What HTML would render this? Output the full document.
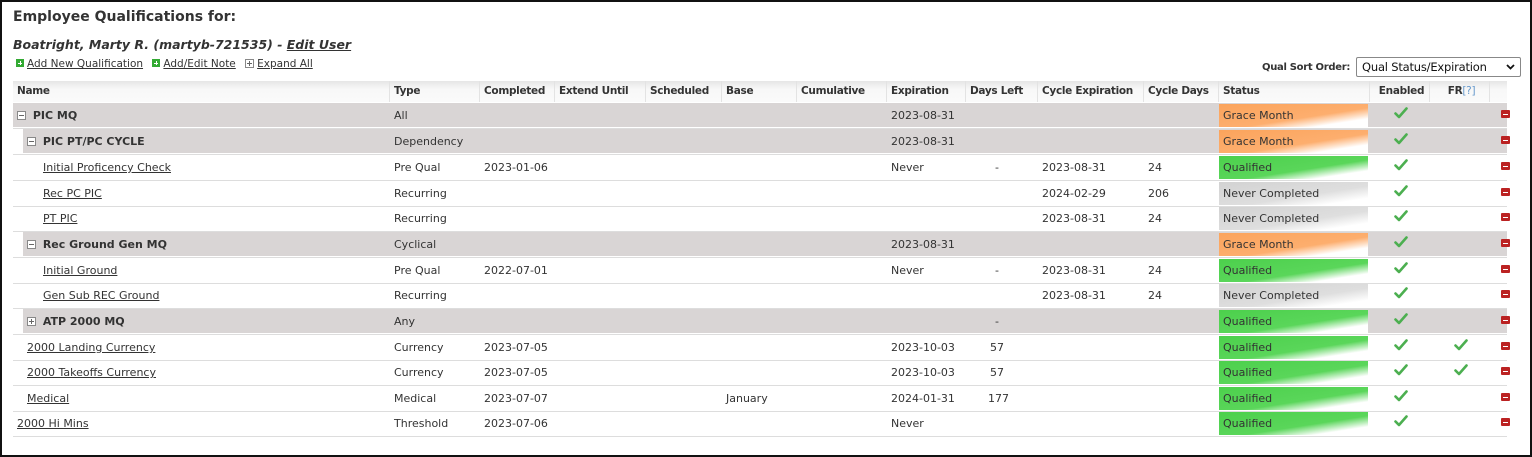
<!DOCTYPE html>
<html><head><meta charset="utf-8"><style>
*{margin:0;padding:0;box-sizing:border-box}
body{width:1532px;height:457px;background:#fff;font-family:"DejaVu Sans","Liberation Sans",sans-serif;font-size:11px;color:#333;position:relative;overflow:hidden}
.frame{position:absolute;left:0;top:0;width:1532px;height:457px;border:2px solid #111}
h1{position:absolute;left:13px;top:9px;font-size:14px;font-weight:bold;color:#333}
.user{position:absolute;left:13px;top:37px;font-size:12.5px;font-weight:bold;font-style:italic;color:#333}
.user u{color:#333}
.links{position:absolute;left:16px;top:58px;font-size:10.5px}
.links span{margin-right:6px}
.links u{color:#333}
.pl{display:inline-block;width:8px;height:8px;background:#3a3;vertical-align:0px;margin-right:3px;position:relative}
.pl:after{content:"";position:absolute;left:2px;top:3.5px;width:4px;height:1px;background:#fff}
.pl:before{content:"";position:absolute;left:3.5px;top:2px;width:1px;height:4px;background:#fff}
.bx{display:inline-block;width:9px;height:9px;border:1px solid #888;vertical-align:-1px;margin-right:3px;position:relative;background:#fff}
.bx:after{content:"";position:absolute;left:1px;top:3px;width:5px;height:1px;background:#666}
.bx.p:before{content:"";position:absolute;left:3px;top:1px;width:1px;height:5px;background:#666}
.sort{position:absolute;left:1262px;top:62px;font-weight:bold;font-size:10px;letter-spacing:-0.3px}
.sel{position:absolute;left:1356px;top:57px;width:165px;height:20px;border:1px solid #888;border-radius:2px;font-size:11.5px;line-height:18px;padding-left:5px;color:#111;letter-spacing:-0.2px}
.sel svg{position:absolute;right:5px;top:6px}
.hdr{position:absolute;left:13px;top:81px;width:1494px;height:21px;background:linear-gradient(#e6e6e6,#f8f8f8 40%,#fafafa);font-weight:bold;color:#333;font-size:10.5px;letter-spacing:-0.3px}
.hdr div{position:absolute;top:0;line-height:21px;height:21px;border-right:1px solid #e3e3e3;padding-left:4px;white-space:nowrap}
.r{position:absolute;left:13px;width:1494px;height:26px;border-bottom:1px solid #ddd}
.g{position:absolute;top:0;bottom:1px;right:0;background:#d9d5d5}
.c{position:absolute;top:0;line-height:25px;white-space:nowrap}
.b{font-weight:bold}
u{color:#333}
.st{position:absolute;left:1206px;top:1px;width:149px;height:23px;line-height:23px;padding-left:4px}
.o{background:linear-gradient(to bottom right,#fba45c 0%,#fdae6e 58%,#fff 82%)}
.q{background:linear-gradient(to bottom right,#4cd04c 0%,#5ad65a 58%,#fff 82%)}
.n{background:linear-gradient(to bottom right,#d2d2d2 0%,#dedede 58%,#fff 85%)}
.ck{position:absolute;top:4px;width:14px;height:12px}
.mn{position:absolute;left:1488px;top:7px;width:9px;height:8px;background:#b22;border-radius:1px}
.mn:after{content:"";position:absolute;left:2px;top:3.5px;width:5px;height:1.5px;background:#fff}
</style></head><body>
<div class="frame"></div>
<h1>Employee Qualifications for:</h1>
<div class="user">Boatright, Marty R. (martyb-721535) - <u>Edit User</u></div>
<div class="links"><span><i class="pl"></i><u>Add New Qualification</u></span> <span><i class="pl"></i><u>Add/Edit Note</u></span> <span><i class="bx p"></i><u>Expand All</u></span></div>
<div class="sort">Qual Sort Order:</div>
<div class="sel">Qual Status/Expiration<svg width="9" height="6" viewBox="0 0 9 6"><path d="M1 1 L4.5 4.5 L8 1" stroke="#111" stroke-width="1.8" fill="none"/></svg></div>

<div class="hdr">
<div style="left:0;width:377px">Name</div>
<div style="left:377px;width:90px">Type</div>
<div style="left:467px;width:75px">Completed</div>
<div style="left:542px;width:91px">Extend Until</div>
<div style="left:633px;width:76px">Scheduled</div>
<div style="left:709px;width:75px">Base</div>
<div style="left:784px;width:90px">Cumulative</div>
<div style="left:874px;width:79px">Expiration</div>
<div style="left:953px;width:72px">Days Left</div>
<div style="left:1025px;width:106px">Cycle Expiration</div>
<div style="left:1131px;width:75px">Cycle Days</div>
<div style="left:1206px;width:151px">Status</div>
<div style="left:1357px;width:60px;text-align:center">Enabled</div>
<div style="left:1417px;width:60px;text-align:center">FR<span style="color:#69c;font-weight:normal">[?]</span></div>
<div style="left:1477px;width:17px;border:none"></div>
</div>

<svg width="0" height="0" style="position:absolute"><defs><symbol id="ck" viewBox="0 0 14 12"><path d="M1.5 6.5 L5 10 L12.5 1.5" stroke="#4caf50" stroke-width="2.6" fill="none" stroke-linecap="round" stroke-linejoin="round"/></symbol></defs></svg>

<div class="r" style="top:103px"><div class="g" style="left:0"></div>
<div class="c b" style="left:4px"><i class="bx"></i> PIC MQ</div><div class="c" style="left:381px">All</div><div class="c" style="left:878px">2023-08-31</div>
<div class="st o">Grace Month</div><svg class="ck" style="left:1381px"><use href="#ck"/></svg><div class="mn"></div></div>

<div class="r" style="top:129px"><div class="g" style="left:10px"></div>
<div class="c b" style="left:14px"><i class="bx"></i> PIC PT/PC CYCLE</div><div class="c" style="left:381px">Dependency</div><div class="c" style="left:878px">2023-08-31</div>
<div class="st o">Grace Month</div><svg class="ck" style="left:1381px"><use href="#ck"/></svg><div class="mn"></div></div>

<div class="r" style="top:155px">
<div class="c" style="left:30px"><u>Initial Proficency Check</u></div><div class="c" style="left:381px">Pre Qual</div><div class="c" style="left:471px">2023-01-06</div><div class="c" style="left:878px">Never</div><div class="c" style="left:982px">-</div><div class="c" style="left:1029px">2023-08-31</div><div class="c" style="left:1135px">24</div>
<div class="st q">Qualified</div><svg class="ck" style="left:1381px"><use href="#ck"/></svg><div class="mn"></div></div>

<div class="r" style="top:181px">
<div class="c" style="left:30px"><u>Rec PC PIC</u></div><div class="c" style="left:381px">Recurring</div><div class="c" style="left:1029px">2024-02-29</div><div class="c" style="left:1135px">206</div>
<div class="st n">Never Completed</div><svg class="ck" style="left:1381px"><use href="#ck"/></svg><div class="mn"></div></div>

<div class="r" style="top:206px">
<div class="c" style="left:30px"><u>PT PIC</u></div><div class="c" style="left:381px">Recurring</div><div class="c" style="left:1029px">2023-08-31</div><div class="c" style="left:1135px">24</div>
<div class="st n">Never Completed</div><svg class="ck" style="left:1381px"><use href="#ck"/></svg><div class="mn"></div></div>

<div class="r" style="top:232px"><div class="g" style="left:10px"></div>
<div class="c b" style="left:14px"><i class="bx"></i> Rec Ground Gen MQ</div><div class="c" style="left:381px">Cyclical</div><div class="c" style="left:878px">2023-08-31</div>
<div class="st o">Grace Month</div><svg class="ck" style="left:1381px"><use href="#ck"/></svg><div class="mn"></div></div>

<div class="r" style="top:258px">
<div class="c" style="left:30px"><u>Initial Ground</u></div><div class="c" style="left:381px">Pre Qual</div><div class="c" style="left:471px">2022-07-01</div><div class="c" style="left:878px">Never</div><div class="c" style="left:982px">-</div><div class="c" style="left:1029px">2023-08-31</div><div class="c" style="left:1135px">24</div>
<div class="st q">Qualified</div><svg class="ck" style="left:1381px"><use href="#ck"/></svg><div class="mn"></div></div>

<div class="r" style="top:283px">
<div class="c" style="left:30px"><u>Gen Sub REC Ground</u></div><div class="c" style="left:381px">Recurring</div><div class="c" style="left:1029px">2023-08-31</div><div class="c" style="left:1135px">24</div>
<div class="st n">Never Completed</div><svg class="ck" style="left:1381px"><use href="#ck"/></svg><div class="mn"></div></div>

<div class="r" style="top:309px"><div class="g" style="left:10px"></div>
<div class="c b" style="left:14px"><i class="bx p"></i> ATP 2000 MQ</div><div class="c" style="left:381px">Any</div><div class="c" style="left:982px">-</div>
<div class="st q">Qualified</div><svg class="ck" style="left:1381px"><use href="#ck"/></svg><div class="mn"></div></div>

<div class="r" style="top:335px">
<div class="c" style="left:14px"><u>2000 Landing Currency</u></div><div class="c" style="left:381px">Currency</div><div class="c" style="left:471px">2023-07-05</div><div class="c" style="left:878px">2023-10-03</div><div class="c" style="left:977px">57</div>
<div class="st q">Qualified</div><svg class="ck" style="left:1381px"><use href="#ck"/></svg><svg class="ck" style="left:1441px"><use href="#ck"/></svg><div class="mn"></div></div>

<div class="r" style="top:360px">
<div class="c" style="left:14px"><u>2000 Takeoffs Currency</u></div><div class="c" style="left:381px">Currency</div><div class="c" style="left:471px">2023-07-05</div><div class="c" style="left:878px">2023-10-03</div><div class="c" style="left:977px">57</div>
<div class="st q">Qualified</div><svg class="ck" style="left:1381px"><use href="#ck"/></svg><svg class="ck" style="left:1441px"><use href="#ck"/></svg><div class="mn"></div></div>

<div class="r" style="top:386px">
<div class="c" style="left:14px"><u>Medical</u></div><div class="c" style="left:381px">Medical</div><div class="c" style="left:471px">2023-07-07</div><div class="c" style="left:713px">January</div><div class="c" style="left:878px">2024-01-31</div><div class="c" style="left:975px">177</div>
<div class="st q">Qualified</div><svg class="ck" style="left:1381px"><use href="#ck"/></svg><div class="mn"></div></div>

<div class="r" style="top:411px">
<div class="c" style="left:4px"><u>2000 Hi Mins</u></div><div class="c" style="left:381px">Threshold</div><div class="c" style="left:471px">2023-07-06</div><div class="c" style="left:878px">Never</div>
<div class="st q">Qualified</div><svg class="ck" style="left:1381px"><use href="#ck"/></svg><div class="mn"></div></div>
</body></html>
